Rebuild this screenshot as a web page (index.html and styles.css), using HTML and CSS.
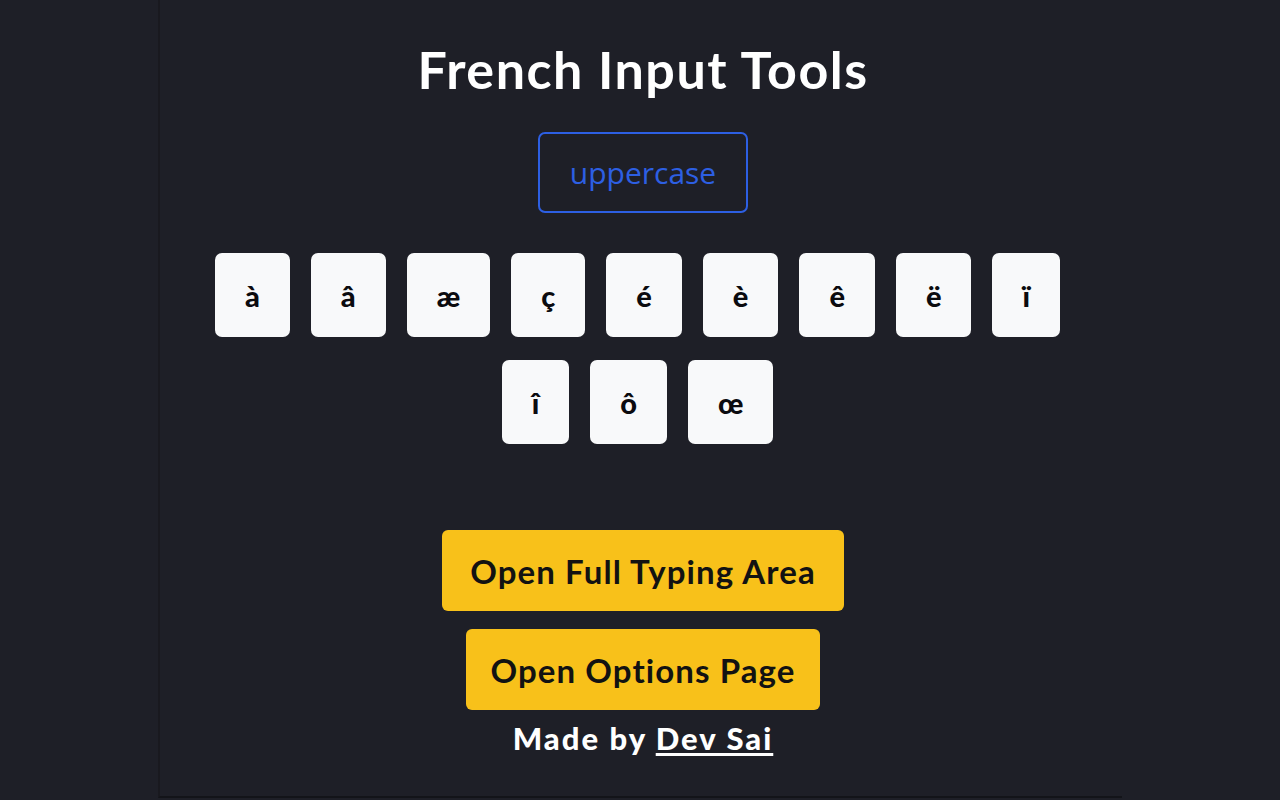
FILE: index.html
```html
<!DOCTYPE html>
<html lang="en">
<head>
<meta charset="utf-8">
<title>French Input Tools</title>
<link rel="stylesheet" href="styles.css">
</head>
<body>
<div class="stage">
  <main class="panel">
    <h1 class="title">French Input Tools</h1>
    <button class="case-btn">uppercase</button>
    <div class="keys">
      <button class="key">à</button>
      <button class="key">â</button>
      <button class="key">æ</button>
      <button class="key">ç</button>
      <button class="key">é</button>
      <button class="key">è</button>
      <button class="key">ê</button>
      <button class="key">ë</button>
      <button class="key">ï</button>
      <button class="key">î</button>
      <button class="key">ô</button>
      <button class="key">œ</button>
    </div>
    <div class="actions">
      <button class="action-btn">Open Full Typing Area</button>
      <button class="action-btn">Open Options Page</button>
    </div>
    <p class="credit">Made by <a class="credit-link" href="#">Dev Sai</a></p>
  </main>
</div>
</body>
</html>
```

FILE: styles.css
```css
html, body {
  margin: 0;
  padding: 0;
  background: #1e1f27;
}

.stage {
  width: 1280px;
  height: 800px;
  display: flex;
  padding-left: 158px;
  box-sizing: border-box;
}

.panel {
  width: 964px;
  height: 798px;
  box-sizing: border-box;
  padding-left: 4px;
  border-left: 2px solid #19191f;
  border-bottom: 2px solid #131419;
  display: flex;
  flex-direction: column;
  align-items: center;
  font-family: "Lato", "Noto Sans", sans-serif;
}

.title {
  margin: 37px 0 0;
  font-size: 52px;
  line-height: 64px;
  font-weight: 700;
  color: #ffffff;
  letter-spacing: 1.5px;
}

.case-btn {
  margin-top: 31px;
  width: 210px;
  height: 81px;
  background: transparent;
  border: 2px solid #2d5fe3;
  border-radius: 7px;
  color: #2d5fe3;
  font-family: "Open Sans", sans-serif;
  font-size: 30px;
  font-weight: 400;
  padding: 0;
  cursor: pointer;
}

.keys {
  margin-top: 40px;
  margin-right: 11px;
  width: 900px;
  display: flex;
  flex-wrap: wrap;
  justify-content: center;
  row-gap: 23px;
  column-gap: 21px;
}

.key {
  height: 84px;
  padding: 0 30px;
  background: #f8f9fa;
  border: none;
  border-radius: 7px;
  color: #0b0b0f;
  font-family: "Lato", "Noto Sans", sans-serif;
  font-size: 29px;
  font-weight: 900;
}

.actions {
  margin-top: 86px;
  display: flex;
  flex-direction: column;
  align-items: center;
  gap: 18px;
}

.action-btn {
  height: 81px;
  padding: 0 28px;
  background: #f8c11a;
  border: none;
  border-radius: 6px;
  color: #121212;
  font-family: "Lato", "Noto Sans", sans-serif;
  font-size: 33px;
  font-weight: 700;
  letter-spacing: 1.1px;
}

.action-btn + .action-btn {
  padding: 0 24px;
}

.credit {
  margin: 8px 0 0;
  font-size: 31px;
  line-height: 40px;
  font-weight: 900;
  color: #ffffff;
  letter-spacing: 2px;
}

.credit-link {
  color: #ffffff;
  text-decoration: underline;
  text-underline-offset: 3px;
}
```
